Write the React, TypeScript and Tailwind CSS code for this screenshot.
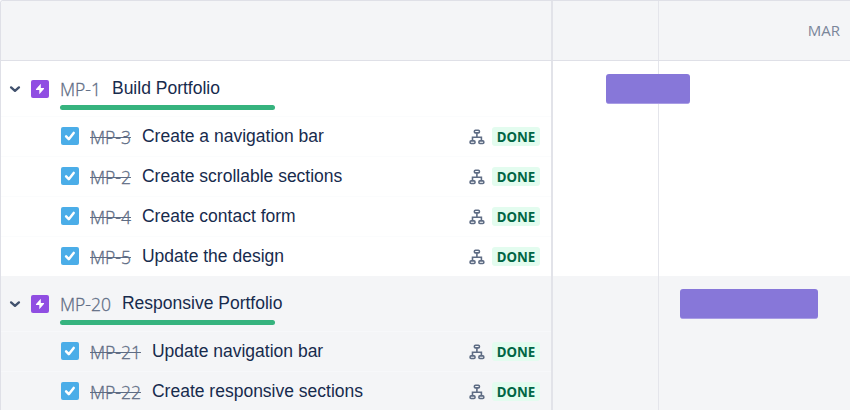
type Child = { id: string; title: string };
type Epic = { id: string; title: string; shaded: boolean; bar: string; children: Child[] };

const epics: Epic[] = [
  {
    id: "MP-1",
    title: "Build Portfolio",
    shaded: false,
    bar: "ml-[53px] w-[84px]",
    children: [
      { id: "MP-3", title: "Create a navigation bar" },
      { id: "MP-2", title: "Create scrollable sections" },
      { id: "MP-4", title: "Create contact form" },
      { id: "MP-5", title: "Update the design" },
    ],
  },
  {
    id: "MP-20",
    title: "Responsive Portfolio",
    shaded: true,
    bar: "ml-[127px] w-[138px]",
    children: [
      { id: "MP-21", title: "Update navigation bar" },
      { id: "MP-22", title: "Create responsive sections" },
    ],
  },
];

function Chevron() {
  return (
    <svg className="h-3 w-3 shrink-0" viewBox="0 0 12 12" fill="none" stroke="#42526e" strokeWidth="2.4" strokeLinecap="round" strokeLinejoin="round">
      <path d="M2.1 4.4 6 7.8 9.9 4.4" />
    </svg>
  );
}

function EpicIcon() {
  return (
    <svg className="h-[18px] w-[18px] shrink-0" viewBox="0 0 18 18">
      <rect width="18" height="18" rx="2" fill="#904ee2" />
      <path d="M9.8 3.8 5.1 9.1c-.4.5-.1 1 .4 1h2.8v4.1L12.9 8.9c.4-.5.1-1-.4-1H9.8Z" fill="#fff" />
    </svg>
  );
}

function TaskIcon() {
  return (
    <svg className="-mt-px h-[18px] w-[18px] shrink-0" viewBox="0 0 18 18" fill="none">
      <rect width="18" height="18" rx="2" fill="#4bade8" />
      <path d="M5.1 9.3 7.8 12.2 12.7 5.9" stroke="#fff" strokeWidth="2.5" strokeLinecap="round" strokeLinejoin="round" />
    </svg>
  );
}

function HierarchyIcon() {
  return (
    <svg className="h-4 w-4 shrink-0" viewBox="0 0 16 16" fill="none" stroke="#5e6c84" strokeWidth="1.6">
      <rect x="5.4" y="1.3" width="5" height="2.6" rx="1" />
      <rect x="1.1" y="11.9" width="4.9" height="2.6" rx="1" />
      <rect x="9.9" y="11.9" width="4.9" height="2.6" rx="1" />
      <path d="M7.9 4v4.2M3.5 12V8.3h8.9V12" />
    </svg>
  );
}

function GridColumns() {
  return <div className="w-[106px] shrink-0 border-r border-[#e4e5eb]" />;
}

function IssueKey({ id, done }: { id: string; done?: boolean }) {
  return (
    <span
      className={`font-['Open_Sans',sans-serif] text-[17.5px] leading-6 font-light text-[#5e6c84] [-webkit-text-stroke:0.3px_#5e6c84] ${
        done ? "line-through decoration-1" : ""
      }`}
    >
      {id}
    </span>
  );
}

function IssueTitle({ children }: { children: string }) {
  return (
    <span className="ml-[11px] pb-[2px] font-['Liberation_Sans',Arial,sans-serif] text-[17.5px] leading-6 text-[#172b4d]">
      {children}
    </span>
  );
}

function EpicRows({ epic }: { epic: Epic }) {
  return (
    <section className={epic.shaded ? "flex bg-[#f4f5f7]" : "flex bg-white"}>
      <div className="w-[552px] shrink-0 border-r-2 border-[#e2e3e9]">
        <div className="flex h-[55px] items-start pl-2">
          <div className="flex h-[56px] items-center gap-[10px]">
            <Chevron />
            <EpicIcon />
          </div>
          <div className="ml-[11px] pt-[15px]">
            <div className="flex h-[26px] w-[214px] items-center whitespace-nowrap">
              <IssueKey id={epic.id} />
              <IssueTitle>{epic.title}</IssueTitle>
            </div>
            <div className="mt-[3px] h-[5px] w-[215px] rounded-full bg-[#36b37e]" />
          </div>
        </div>
        {epic.children.map((child) => (
          <div key={child.id} className="flex h-10 items-center border-t border-[#f9fafb]/60 pl-[60px] whitespace-nowrap">
            <TaskIcon />
            <span className="flex items-center pl-[11px]">
              <IssueKey id={child.id} done />
              <IssueTitle>{child.title}</IssueTitle>
            </span>
            <div className="mr-[11px] ml-auto flex items-center gap-[7px]">
              <HierarchyIcon />
              <span className="flex h-[19px] w-12 items-center justify-center rounded-[3px] bg-[#e3fcef] pt-[2px] font-['Noto_Sans',sans-serif] text-[13.3px] leading-none font-bold text-[#006644]">DONE</span>
            </div>
          </div>
        ))}
      </div>
      <div className="grid grow">
        <div className="col-start-1 row-start-1 flex">
          <GridColumns />
        </div>
        <div className="col-start-1 row-start-1 pt-[13px]">
          <div className={`${epic.bar} h-[30px] rounded-[3px] border-b border-[#a99de5] bg-[#8777d9]`} />
        </div>
      </div>
    </section>
  );
}

export default function App() {
  return (
    <main className="h-[410px] w-[850px] overflow-hidden rounded-tl-[3px] border-t border-l border-[#dfe0e7] bg-white">
      <header className="flex h-[60px] border-b border-[#dfe0e7] bg-[#f4f5f7]">
        <div className="w-[552px] shrink-0 border-r-2 border-[#e2e3e9]" />
        <GridColumns />
        <div className="flex grow items-center justify-end pr-[10px] font-['Open_Sans',sans-serif] text-[15px] text-[#7a869a]">MAR</div>
      </header>
      {epics.map((epic) => (
        <EpicRows key={epic.id} epic={epic} />
      ))}
    </main>
  );
}
